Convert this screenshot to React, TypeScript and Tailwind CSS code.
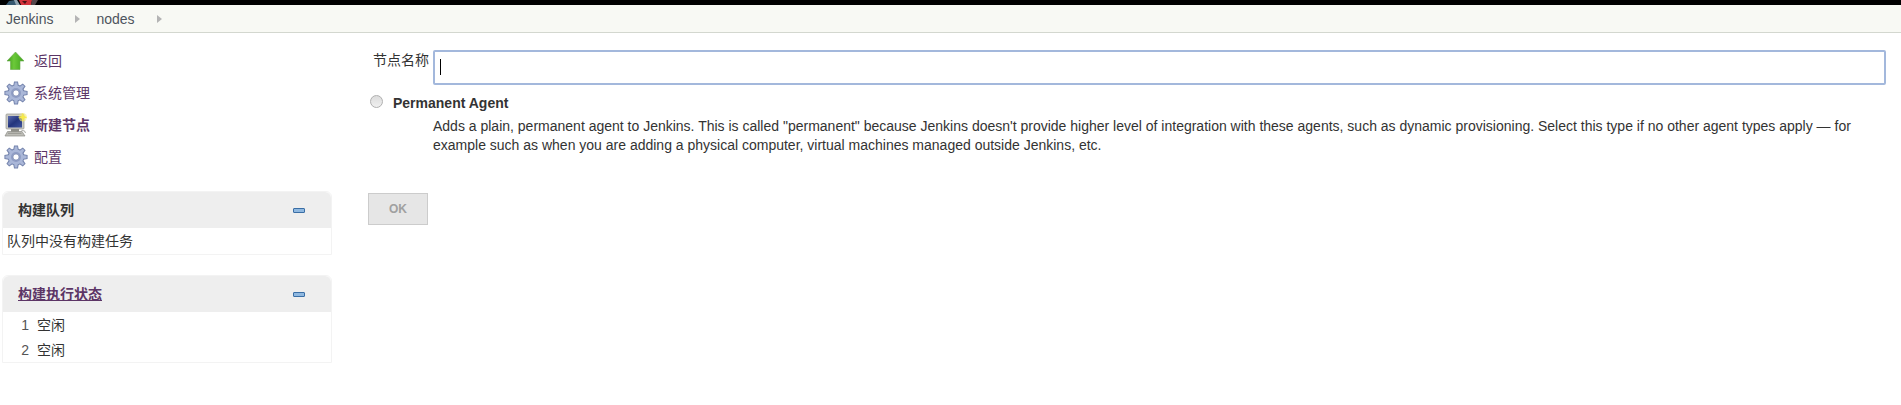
import React, { useState } from 'react';

const ArrowUpIcon: React.FC = () => (
  <svg width="24" height="24" viewBox="0 0 24 24" aria-hidden="true">
    <defs>
      <linearGradient id="arrow-green" x1="0" y1="0" x2="1" y2="0">
        <stop offset="0" stopColor="#3f9a1a" />
        <stop offset="0.4" stopColor="#6cc93a" />
        <stop offset="1" stopColor="#3fa51c" />
      </linearGradient>
    </defs>
    <path
      d="M11.5 3 L20 12 H16 V20.5 H6.5 V12 H3 Z"
      fill="url(#arrow-green)"
      stroke="#6aa84f"
      strokeWidth="0.6"
      strokeLinejoin="round"
    />
  </svg>
);

const GearIcon: React.FC = () => (
  <svg width="24" height="24" viewBox="0 0 24 24" aria-hidden="true">
    <g fill="#7584ad">
      {[0, 45, 90, 135, 180, 225, 270, 315].map((angle) => (
        <path key={angle} d="M9 6 L10 0.4 H14 L15 6 Z" transform={`rotate(${angle} 12 12)`} />
      ))}
    </g>
    <circle cx="12" cy="12" r="8.4" fill="#7584ad" />
    <g fill="#aab7d8">
      {[0, 45, 90, 135, 180, 225, 270, 315].map((angle) => (
        <path key={angle} d="M10.1 6 L10.8 1.4 H13.2 L13.9 6 Z" transform={`rotate(${angle} 12 12)`} />
      ))}
    </g>
    <circle cx="12" cy="12" r="7.5" fill="#aab7d8" />
    <circle cx="12" cy="12" r="5" fill="#8f9dc4" />
    <circle cx="12" cy="12" r="3" fill="#ffffff" stroke="#7584ad" strokeWidth="0.6" />
  </svg>
);

const ComputerIcon: React.FC = () => (
  <svg width="24" height="24" viewBox="0 0 24 24" aria-hidden="true">
    <defs>
      <linearGradient id="screen-blue" x1="0" y1="0" x2="1" y2="1">
        <stop offset="0" stopColor="#5c6cae" />
        <stop offset="0.5" stopColor="#23357c" />
        <stop offset="1" stopColor="#3f549e" />
      </linearGradient>
    </defs>
    <rect x="2" y="1" width="18" height="15" rx="1" fill="#c9c9c3" stroke="#96968f" strokeWidth="0.7" />
    <rect x="4" y="3" width="14" height="11.5" fill="url(#screen-blue)" />
    <rect x="7" y="16" width="8" height="3" fill="#8f8f89" />
    <path d="M3.5 18.5 H18 L21 23 H1 Z" fill="#bdbdb7" stroke="#8d8d87" strokeWidth="0.7" />
    <path d="M4 20.3 H17.5" stroke="#8d8d87" strokeWidth="0.8" />
    <path d="M17.5 17.5 Q21.5 17 21.5 20" fill="none" stroke="#96968f" strokeWidth="0.8" />
    <circle cx="18.8" cy="4.2" r="4.2" fill="#f6ec7a" opacity="0.6" />
    <path d="M18.8 0 L20 3 L23.2 4.2 L20 5.4 L18.8 8.4 L17.6 5.4 L14.6 4.2 L17.6 3 Z" fill="#f7ea4a" />
  </svg>
);

const CollapseIcon: React.FC = () => (
  <svg width="12" height="5" viewBox="0 0 12 5" aria-hidden="true">
    <rect x="0.5" y="0.5" width="11" height="4" rx="0.5" fill="#8fb8e0" stroke="#3a6ea5" />
  </svg>
);

const CrumbArrow: React.FC = () => (
  <svg width="5" height="8" viewBox="0 0 5 8" aria-hidden="true">
    <path d="M0 0 L5 4 L0 8 Z" fill="#b4b4b4" />
  </svg>
);

const LogoEdge: React.FC = () => (
  <svg className="ml-[5px] block" width="34" height="5" viewBox="0 0 34 5" aria-hidden="true">
    <path d="M1 5 L4 1 L10 0 L13 5 Z" fill="#35586f" />
    <path d="M9 0 H12 L15 5 H11 Z" fill="#8fa3b0" />
    <path d="M14 0 H27 L26 5 H16 Z" fill="#d2323a" />
    <path d="M17 1 L20 4 L22 1 Z" fill="#4a1113" />
    <path d="M27 0 H33 L30 5 H26 Z" fill="#54474b" />
  </svg>
);

const tasks = [
  { label: '返回', icon: ArrowUpIcon, active: false },
  { label: '系统管理', icon: GearIcon, active: false },
  { label: '新建节点', icon: ComputerIcon, active: true },
  { label: '配置', icon: GearIcon, active: false },
];

const executors = [
  { id: 1, status: '空闲' },
  { id: 2, status: '空闲' },
];

interface PaneProps {
  title: React.ReactNode;
  children: React.ReactNode;
}

const Pane: React.FC<PaneProps> = ({ title, children }) => {
  const [open, setOpen] = useState(true);

  return (
    <section className="rounded-t-md border border-[#f3f3f3]">
      <div className="flex h-9 items-center justify-between rounded-t-md bg-[#eeeeee] pl-[15px] pr-[26px]">
        <h2 className="font-bold">{title}</h2>
        <button type="button" aria-label="collapse" onClick={() => setOpen(!open)}>
          <CollapseIcon />
        </button>
      </div>
      {open && children}
    </section>
  );
};

const App: React.FC = () => {
  const [name, setName] = useState('');

  return (
    <div className='bg-white font-["Liberation_Sans","Noto_Sans_CJK_SC",sans-serif] text-sm text-[#333333]'>
      <header className="h-[5px] overflow-hidden bg-black">
        <LogoEdge />
      </header>

      {/* Breadcrumbs */}
      <nav className="flex h-7 items-center border-b border-[#d3d7cf] bg-[#f8f9f4] pl-1.5 text-[#4d545d]">
        <a href="#jenkins">Jenkins</a>
        <span className="pl-[22px] pr-4"><CrumbArrow /></span>
        <a href="#nodes">nodes</a>
        <span className="pl-[22px]"><CrumbArrow /></span>
      </nav>

      <div className="flex">
        <aside className="w-[332px] shrink-0 pl-0.5 pt-3">
          <ul className="pl-0.5">
            {tasks.map(({ label, icon: Icon, active }) => (
              <li key={label}>
                <a href="#task" className="flex h-8 items-center gap-1.5 text-[#5c3566]">
                  <Icon />
                  <span className={active ? 'font-bold' : ''}>{label}</span>
                </a>
              </li>
            ))}
          </ul>

          <div className="flex flex-col gap-5 pt-[18px]">
            <Pane title="构建队列">
              <p className="h-[26px] pl-1 leading-[26px]">队列中没有构建任务</p>
            </Pane>

            <Pane title={<a href="#computer" className="text-[#5c3566] underline">构建执行状态</a>}>
              <table>
                <tbody>
                  {executors.map((executor) => (
                    <tr key={executor.id} className="h-[25px] leading-6">
                      <td className="w-[26px] text-right text-[#555555]">{executor.id}</td>
                      <td className="pl-2">{executor.status}</td>
                    </tr>
                  ))}
                </tbody>
              </table>
            </Pane>
          </div>
        </aside>

        <main className="min-w-0 flex-1 pl-9 pr-[15px] pt-[17px]">
          <form onSubmit={(e) => e.preventDefault()}>
            <div className="flex">
              <label htmlFor="name" className="w-[65px] shrink-0 pl-[5px]">节点名称</label>
              <div className="relative flex-1">
                <input
                  id="name"
                  type="text"
                  value={name}
                  onChange={(e) => setName(e.target.value)}
                  className="block h-[35px] w-full rounded-xs border-2 border-[#a3b8dc] bg-white px-1.5 caret-transparent outline-none"
                />
                {name === '' && <span className="absolute left-[7px] top-[9px] h-4 w-px bg-black" />}
              </div>
            </div>

            <div className="flex items-start gap-2.5 pl-0.5 pt-2">
              <input
                id="permanent"
                type="radio"
                name="mode"
                className="mt-0.5 size-[13px] appearance-none rounded-full border border-[#b0b0b0] bg-linear-to-b from-[#dcdcdc] to-[#f0f0f0] checked:bg-[#555555]"
              />
              <label htmlFor="permanent" className="font-bold">Permanent Agent</label>
            </div>
            <p className="pl-[65px] pt-1 leading-[19px]">
              Adds a plain, permanent agent to Jenkins. This is called "permanent" because Jenkins doesn't provide higher level of integration with these agents, such as dynamic provisioning. Select this type if no other agent types apply — for example such as when you are adding a physical computer, virtual machines managed outside Jenkins, etc.
            </p>

            <button
              type="submit"
              disabled
              className="mt-[38px] h-8 w-[60px] border border-[#cccccc] bg-[#e6e6e6] text-xs font-bold text-[#a0a0a0]"
            >
              OK
            </button>
          </form>
        </main>
      </div>
    </div>
  );
};

export default App;
